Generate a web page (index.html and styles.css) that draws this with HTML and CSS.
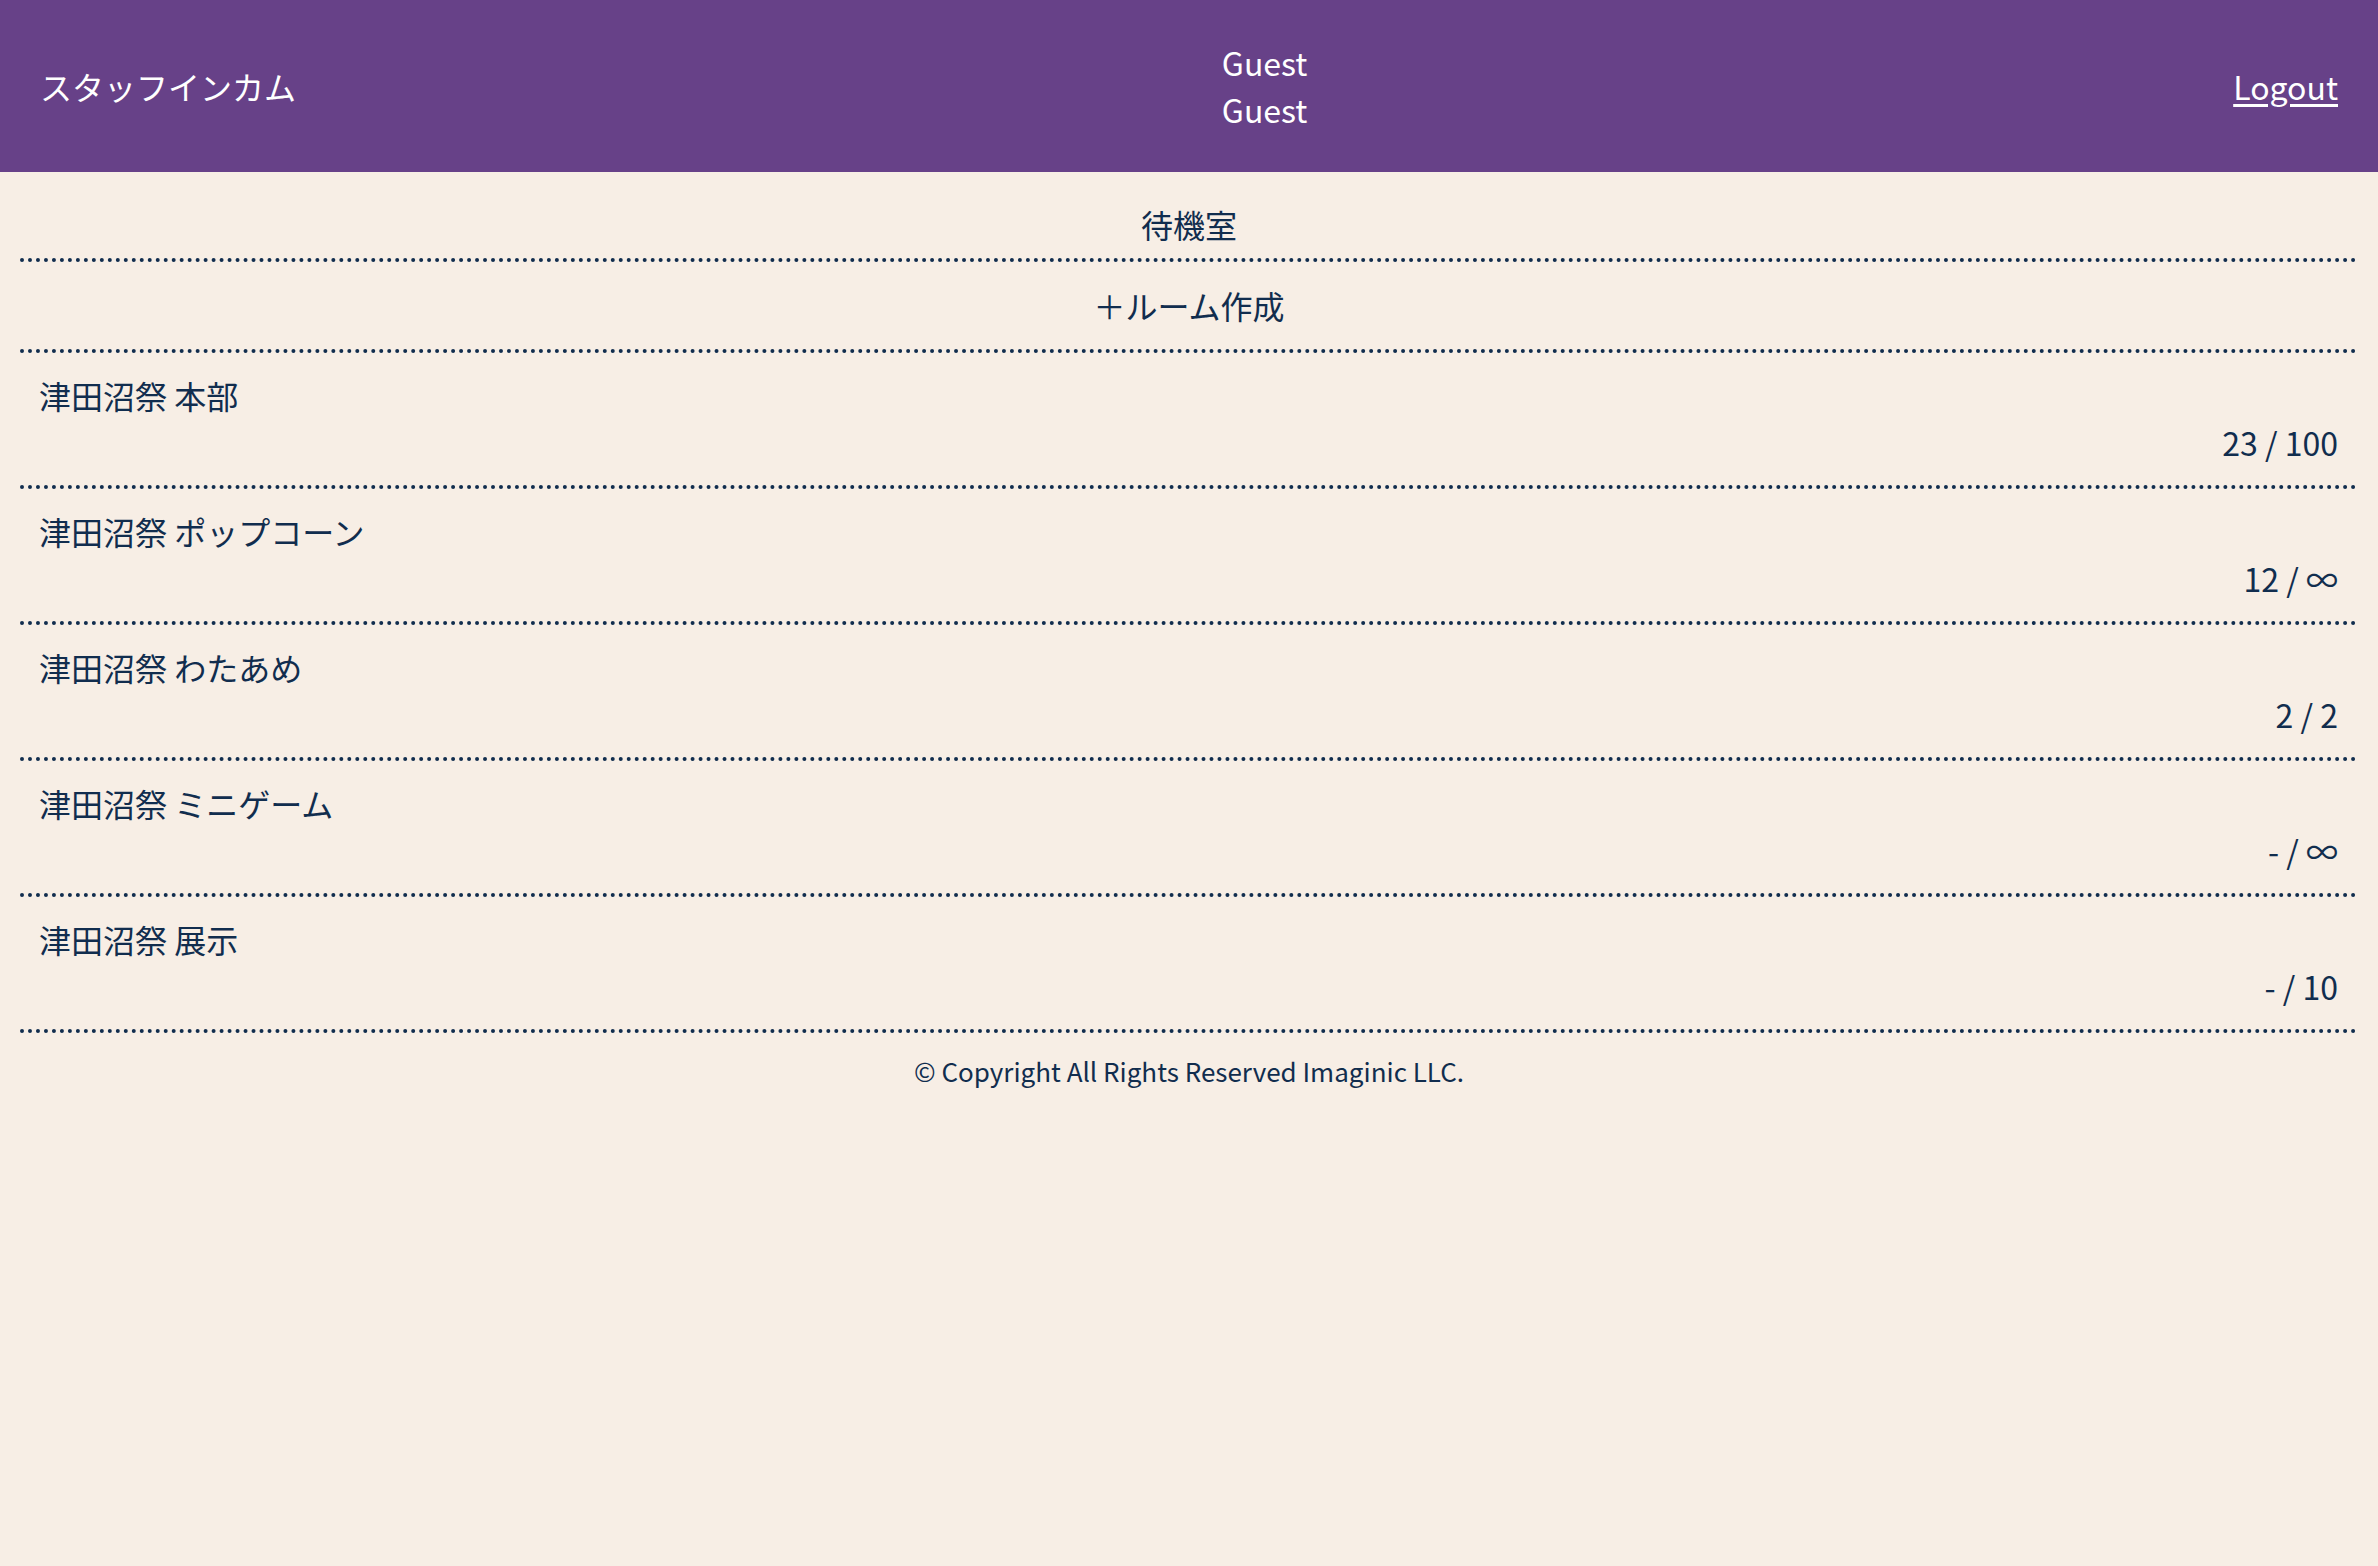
FILE: index.html
```html
<!DOCTYPE html>
<html lang="ja">
<head>
<meta charset="utf-8">
<title>スタッフインカム</title>
<link rel="stylesheet" href="styles.css">
</head>
<body>
<header class="topbar">
  <div class="brand">スタッフインカム</div>
  <div class="user">
    <div>Guest</div>
    <div>Guest</div>
  </div>
  <a class="logout" href="#">Logout</a>
</header>
<main class="lobby">
  <h1 class="lobby-title">待機室</h1>
  <div class="create">＋ルーム作成</div>
  <ul class="rooms">
    <li class="room"><div class="room-name">津田沼祭 本部</div><div class="room-count">23 / 100</div></li>
    <li class="room"><div class="room-name">津田沼祭 ポップコーン</div><div class="room-count">12 / ∞</div></li>
    <li class="room"><div class="room-name">津田沼祭 わたあめ</div><div class="room-count">2 / 2</div></li>
    <li class="room"><div class="room-name">津田沼祭 ミニゲーム</div><div class="room-count">- / ∞</div></li>
    <li class="room"><div class="room-name">津田沼祭 展示</div><div class="room-count">- / 10</div></li>
  </ul>
  <footer class="footer">© Copyright All Rights Reserved Imaginic LLC.</footer>
</main>
</body>
</html>
```

FILE: styles.css
```css
html, body {
  margin: 0;
  padding: 0;
}
body {
  background: #f7eee5;
  color: #112d4e;
  font-family: "Noto Sans CJK JP", "Noto Sans", sans-serif;
  font-size: 32px;
  line-height: 47px;
  min-height: 1566px;
}
.topbar {
  height: 172px;
  box-sizing: border-box;
  background: #674188;
  color: #ffffff;
  display: flex;
  align-items: center;
  justify-content: space-between;
  padding: 0 40px 0 40px;
}
.brand {
  font-size: 32px;
}
.user {
  text-align: center;
}
.logout {
  color: #ffffff;
  text-decoration: underline;
  text-underline-offset: 4px;
}
.lobby {
  margin: 0 20px;
}
.lobby-title {
  margin: 0;
  padding: 29px 0 10px;
  font-size: 32px;
  font-weight: 400;
  line-height: 47px;
  text-align: center;
  border-bottom: 4px dotted #112d4e;
}
.create {
  padding: 20px 0;
  text-align: center;
  border-bottom: 4px dotted #112d4e;
  cursor: pointer;
}
.rooms {
  list-style: none;
  margin: 0;
  padding: 0;
}
.room {
  padding: 19px 20px 19px 19px;
  border-bottom: 4px dotted #112d4e;
}
.room-count {
  text-align: right;
}
.footer {
  padding-top: 18px;
  font-size: 26px;
  line-height: 40px;
  text-align: center;
}
```
